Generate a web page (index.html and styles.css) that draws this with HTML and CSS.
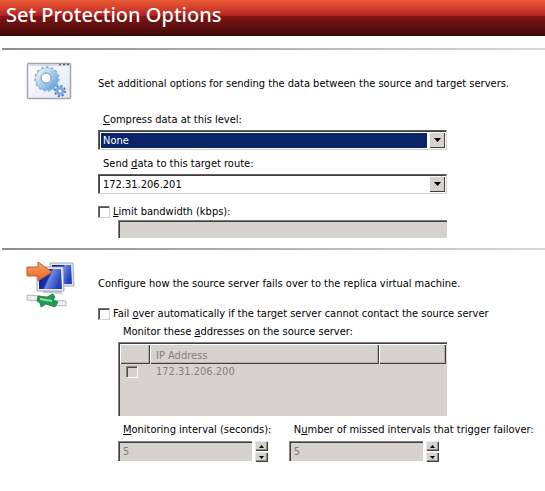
FILE: index.html
```html
<!doctype html>
<html lang="en">

<head>
  <meta charset="utf-8">
  <title>Set Protection Options</title>
  <meta name="viewport" content="width=device-width, initial-scale=1">
  <link rel="stylesheet" href="styles.css">
</head>
<body>
<h1 class="title">Set Protection Options</h1>
<form class="options">
  <section class="section">
    <div class="icon">
      <svg class="gears" viewBox="0 0 46 38" width="46" height="38" aria-hidden="true">
        <defs>
          <linearGradient id="win" x1="0" y1="0" x2="1" y2="1">
            <stop offset="0" stop-color="#fff"/>
            <stop offset="1" stop-color="#e3e6f3"/>
          </linearGradient>
          <linearGradient id="gear" x1="0" y1="0" x2="1" y2="1">
            <stop offset="0" stop-color="#e4f0f7"/>
            <stop offset="1" stop-color="#6ba6de"/>
          </linearGradient>
        </defs>
        <rect x="1.500" y="1.500" width="43" height="35" rx="1" fill="url(#win)" stroke="#a3a5b0" stroke-width="1.500"/>
        <path d="M3 3H43" stroke="#d3d7e6" stroke-width="2"/>
        <path d="M33 2.500h2M37 2.500h2M41 2.500h2" stroke="#59617e" stroke-width="1.500"/>
        <circle cx="21" cy="17" r="11.500" fill="none" stroke="#8fb6da" stroke-width="2.500" stroke-dasharray="2.500 2.300"/>
        <circle cx="21" cy="17" r="8" fill="none" stroke="#86acd6" stroke-width="7"/>
        <circle cx="21" cy="17" r="8" fill="none" stroke="url(#gear)" stroke-width="6"/>
        <circle cx="20" cy="16" r="5" fill="#fff" stroke="#7893c1"/>
        <circle cx="34" cy="29" r="5" fill="none" stroke="#4777b4" stroke-width="2" stroke-dasharray="2 1.900"/>
        <circle cx="34" cy="29" r="3.500" fill="#fff" stroke="#7eaee1" stroke-width="2.500"/>
        <circle cx="34" cy="29" r="2" fill="#fff" stroke="#49699f" stroke-width=".7"/>
      </svg>
    </div>
    <div class="content">
      <p class="intro">Set additional options for sending the data between the source and target servers.</p>
      <div class="fields">
        <label class="label" for="level"><u>C</u>ompress data at this level:</label>
        <div class="combo combo-active">
          <select id="level"><option>None</option></select>
          <span class="arrow"><svg viewBox="0 0 7 4" width="7" height="4"><path d="M0 0h7L3.500 4z"/></svg></span>
        </div>
        <label class="label" for="route">Send <u>d</u>ata to this target route:</label>
        <div class="combo">
          <select id="route"><option>172.31.206.201</option></select>
          <span class="arrow"><svg viewBox="0 0 7 4" width="7" height="4"><path d="M0 0h7L3.500 4z"/></svg></span>
        </div>
        <label class="check"><input type="checkbox" id="limit"><span><u>L</u>imit bandwidth (kbps):</span></label>
        <div class="indent"><input class="box" type="text" aria-label="Bandwidth limit (kbps)" disabled></div>
      </div>
    </div>
  </section>

  <section class="section">
    <div class="icon">
      <svg class="servers" viewBox="0 0 50 48" width="50" height="48" aria-hidden="true">
        <defs>
          <linearGradient id="screen" x1="0" y1="0" x2="1" y2=".4">
            <stop offset="0" stop-color="#06107c"/>
            <stop offset=".5" stop-color="#1c34b0"/>
            <stop offset=".55" stop-color="#6f8be0"/>
            <stop offset="1" stop-color="#2440bb"/>
          </linearGradient>
          <linearGradient id="arrow" x1="0" y1="0" x2="0" y2="1">
            <stop offset="0" stop-color="#f9a468"/>
            <stop offset="1" stop-color="#e8641f"/>
          </linearGradient>
        </defs>
        <path d="M24 1L47 1 48 24 25 24z" fill="#e4e6ef" stroke="#a5a9bd"/>
        <path d="M26 3L45 3 46 22 27 22z" fill="url(#screen)"/>
        <path d="M17 28l18 1 2 3-20-1z" fill="#c5c8d2"/>
        <path d="M11 5L37 5 38 29 11 29z" fill="#eceef6" stroke="#a0a4ba"/>
        <path d="M13 7L35 7 36 27 13 27z" fill="url(#screen)"/>
        <path d="M1 5h11V0l14 10-14 9v-5H1z" fill="url(#arrow)" stroke="#b9602f"/>
        <path d="M1 33l13 1v5l-13-1z" fill="#eee" stroke="#ababab" stroke-width=".8"/>
        <path d="M27 38l13 1v5l-13-1z" fill="#eee" stroke="#ababab" stroke-width=".8"/>
        <path d="M12 34l9 1 6-3 2 3-2 3 5 2-3 5-9-3-5 3-1-4-3-2z" fill="#1f9c50" stroke="#147a3c" stroke-width=".8"/>
        <path d="M14 37l12 2" stroke="#8be0a8" stroke-width="2"/>
      </svg>
    </div>
    <div class="content">
      <p class="intro">Configure how the source server fails over to the replica virtual machine.</p>
      <label class="check"><input type="checkbox" id="failover"><span>Fail <u>o</u>ver automatically if the target server cannot contact the source server</span></label>
      <div class="indent">
        <div class="fields">
          <div class="label" id="monitor">Monitor these <u>a</u>ddresses on the source server:</div>
          <div class="list">
            <table aria-labelledby="monitor">
              <thead>
                <tr><th class="col-check"></th><th>IP Address</th><th class="col-rest"></th></tr>
              </thead>
              <tbody>
                <tr><td><input type="checkbox" aria-label="172.31.206.200" disabled></td><td>172.31.206.200</td><td></td></tr>
              </tbody>
            </table>
          </div>
        </div>
        <div class="intervals">
          <div>
            <label class="label" for="interval"><u>M</u>onitoring interval (seconds):</label>
            <div class="spin">
              <input class="box" type="text" id="interval" value="5" disabled>
              <div class="spin-buttons">
                <button type="button" aria-label="Increase"><svg viewBox="0 0 5 3" width="5" height="3"><path d="M0 3h5L2.500 0z"/></svg></button>
                <button type="button" aria-label="Decrease"><svg viewBox="0 0 5 3" width="5" height="3"><path d="M0 0h5L2.500 3z"/></svg></button>
              </div>
            </div>
          </div>
          <div>
            <label class="label" for="missed">N<u>u</u>mber of missed intervals that trigger failover:</label>
            <div class="spin">
              <input class="box" type="text" id="missed" value="5" disabled>
              <div class="spin-buttons">
                <button type="button" aria-label="Increase"><svg viewBox="0 0 5 3" width="5" height="3"><path d="M0 3h5L2.500 0z"/></svg></button>
                <button type="button" aria-label="Decrease"><svg viewBox="0 0 5 3" width="5" height="3"><path d="M0 0h5L2.500 3z"/></svg></button>
              </div>
            </div>
          </div>
        </div>
      </div>
    </div>
  </section>
</form>
</body>
</html>
```
FILE: styles.css
```css
*{
  box-sizing: border-box;
  padding: 0;
  margin: 0;
}
body{
  font-family: "DejaVu Sans Condensed", "DejaVu Sans", Tahoma, sans-serif;
  font-size: 11px;
  line-height: 16px;
  color: #000;
  background: #fff;
}
input, select, button{
  font: inherit;
}
.title{
  height: 36px;
  padding-left: 6px;
  font-family: "Noto Sans", Tahoma, sans-serif;
  font-size: 20px;
  font-weight: 500;
  line-height: 29px;
  color: #fff;
  background: linear-gradient(#ea5a35, #d8432f 20%, #b01f20 44%, #821511 46%, #641010 70%, #3d0905);
}
.options{
  padding: 12px 0 0 2px;
}
.section{
  display: flex;
  min-height: 200px;
  padding-top: 12px;
  border-top: 2px solid;
  border-image: linear-gradient(to right, #8e8e8e, #d8d8d8) 1;
}
.icon{
  flex: none;
  width: 96px;
  padding-left: 24px;
}
.icon svg{
  display: block;
}
.content{
  flex: 1;
  min-width: 0;
  padding-top: 14px;
}
.intro{
  white-space: nowrap;
}
.fields{
  padding-right: 98px;
}
.label{
  display: block;
  padding-left: 5px;
  white-space: nowrap;
}
.content > .fields > .label{
  padding-top: 6px;
  padding-bottom: 2px;
}
.intro + .fields{
  padding-top: 14px;
}
.combo{
  display: flex;
  height: 20px;
  padding: 1px;
  border: 1px solid;
  border-color: #606060 #d4d0c8 #d4d0c8 #606060;
  box-shadow: inset 1px 1px #404040;
}
.combo select{
  flex: 1;
  min-width: 0;
  margin: 1px 2px 0 1px;
  padding-left: 2px;
  border: 0;
  color: #000;
  background: #fff;
  appearance: none;
}
.combo-active select{
  color: #fff;
  background: #0a246a;
}
.arrow{
  display: flex;
  align-items: center;
  justify-content: center;
  width: 16px;
  background: #d6d3ce;
  box-shadow: inset 1px 1px #fff, inset -1px -1px #404040;
}
.check{
  display: flex;
  align-items: center;
  gap: 3px;
  white-space: nowrap;
}
.fields > .check{
  padding-top: 10px;
}
input[type="checkbox"]{
  flex: none;
  display: block;
  width: 12px;
  height: 12px;
  border: 1px solid;
  border-color: #707070 #d4d0c8 #d4d0c8 #707070;
  box-shadow: inset 1px 1px #505050;
  background: #fff;
  appearance: none;
}
input[type="checkbox"]:disabled{
  border-color: #808080 #fff #fff #808080;
  background: #d6d3ce;
}
.indent{
  padding-left: 20px;
}
.box{
  display: block;
  width: 100%;
  height: 18px;
  padding-left: 5px;
  border: 0;
  color: #808080;
  background: #d6d3ce;
  box-shadow: inset 1px 1px #808080, inset 2px 2px #404040;
}
.intro + .check{
  padding-top: 14px;
}
.indent .fields > .label{
  padding-top: 2px;
  padding-bottom: 2px;
}
.list{
  height: 74px;
  padding: 2px 1px 0 2px;
  color: #808080;
  background: #d6d3ce;
  box-shadow: inset 1px 1px #808080, inset 2px 2px #404040;
}
.list table{
  width: 100%;
  border-collapse: collapse;
  table-layout: fixed;
}
.list th{
  height: 20px;
  padding: 3px 0 0 6px;
  font-weight: normal;
  text-align: left;
  box-shadow: inset 1px 1px #fff, inset -1px -1px #404040, inset -2px -2px #b0b0b0;
}
.list td{
  height: 16px;
  padding-left: 6px;
}
.list .col-check{
  width: 30px;
}
.list .col-rest{
  width: 67px;
}
.intervals{
  display: grid;
  grid-template-columns: 2fr 3fr;
  padding-top: 6px;
}
.intervals .label{
  padding-bottom: 3px;
}
.spin{
  display: flex;
  gap: 3px;
  max-width: 150px;
}
.spin .box{
  flex: 1;
  min-width: 0;
  height: 20px;
}
.spin-buttons{
  display: flex;
  flex-direction: column;
  gap: 1px;
}
.spin button{
  display: flex;
  align-items: center;
  justify-content: center;
  width: 13px;
  height: 10px;
  border: 0;
  background: #d6d3ce;
  box-shadow: inset 1px 1px #e8e8e8, inset -1px -1px #404040, inset -2px -2px #909090;
}
```
